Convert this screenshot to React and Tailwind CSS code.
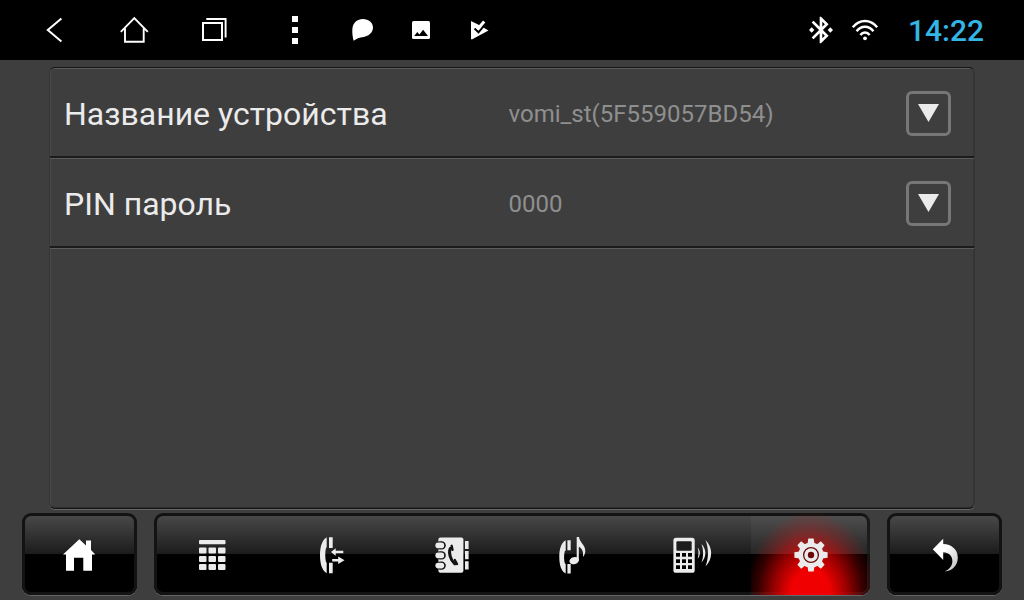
import clsx from "clsx";

const settings = [
  { id: "device-name", label: "Название устройства", value: "vomi_st(5F559057BD54)" },
  { id: "pin", label: "PIN пароль", value: "0000" },
];

/* Status bar icons, 32x32 */

const BackIcon = () => (
  <svg className="size-8" viewBox="0 0 32 32" fill="none" stroke="currentColor" strokeWidth="2">
    <path d="M23.4 4.4 9.8 16l13.6 11.6" />
  </svg>
);

const HomeOutlineIcon = () => (
  <svg className="size-8" viewBox="0 0 32 32" fill="none" stroke="currentColor" strokeWidth="1.9">
    <path d="M2.8 17.8 16.3 4.2l13.5 13.6M7 14.5v13.3h18.7V14.5" />
  </svg>
);

const RecentsIcon = () => (
  <svg className="size-8" viewBox="0 0 32 32" fill="none" stroke="currentColor">
    <rect x="5" y="9" width="19" height="17" strokeWidth="2" />
    <path d="M8.3 5h19.3v18.5" strokeWidth="1.9" />
  </svg>
);

const MoreIcon = () => (
  <svg className="size-8" viewBox="0 0 32 32" fill="currentColor">
    <path d="M14 2h6v6h-6zM14 13h6v6h-6zM14 24h6v6h-6z" />
  </svg>
);

const BubbleIcon = () => (
  <svg className="size-8" viewBox="0 0 32 32" fill="currentColor">
    <path d="M7.6 26.8C6.5 22.6 6.1 18.5 6.4 14.6 7 8.6 11.4 5 16.8 5 22.8 5 27 8.8 27 13.6c0 5-4.4 8.6-9.4 9.4-4.2.6-7.3 1.7-10 3.8z" />
  </svg>
);

const PictureIcon = () => (
  <svg className="size-8" viewBox="0 0 32 32">
    <rect x="7" y="7" width="18" height="18" rx="1.6" fill="currentColor" />
    <path d="M9.2 22l3.1-4 2.1 2.6 3.7-4.8L23 22z" fill="#000" />
  </svg>
);

const PlayCheckIcon = () => (
  <svg className="size-8" viewBox="0 0 32 32">
    <path d="M7 7l9 4.4 8.5 5L7.8 25.4 7 25z" fill="currentColor" />
    <path d="M10.600 14.600l3.900 3.600 7.200-8.600" fill="none" stroke="#000" strokeWidth="2" />
    <path d="M11.800 11.800l2.600 2.500 5.800-6.700" fill="none" stroke="currentColor" strokeWidth="3" />
  </svg>
);

const BluetoothIcon = () => (
  <svg className="size-8" viewBox="0 0 24 24" fill="currentColor">
    <path d="M7 12l-2-2-2 2 2 2 2-2zm10.71-4.29L12 2h-1v7.59L6.41 5 5 6.41 10.59 12 5 17.59 6.41 19 11 14.41V22h1l5.71-5.71-4.3-4.29 4.3-4.29zM13 5.83l1.88 1.88L13 9.59V5.83zm1.88 10.46L13 18.17v-3.76l1.88 1.88zM19 10l-2 2 2 2 2-2-2-2z" />
  </svg>
);

const WifiIcon = () => (
  <svg className="size-8" viewBox="0 0 32 32" fill="none" stroke="currentColor" strokeWidth="2.5">
    <path d="M3.8 13.2C10.5 5 21.5 5 28.2 13.2M7.6 17.2c4.6-5.8 12.2-5.8 16.8 0M11.4 21c2.5-3.4 6.7-3.4 9.2 0" />
    <circle cx="16" cy="24.3" r="1.9" fill="currentColor" stroke="none" />
  </svg>
);

/* Tab bar icons, 40x40 */

const HouseIcon = () => (
  <svg className="size-10" viewBox="0 0 40 40" fill="#fff">
    <path d="M19.3 5.3 26 11.5V6.5h5V16l4.3 4.5H32v16.2h-8.7v-13H14v13H6V20.5H3z" />
  </svg>
);

const KeypadIcon = () => (
  <svg className="size-10" viewBox="0 0 40 40" fill="currentColor">
    <rect x="5" y="6" width="26.5" height="4.3" rx="1" />
    {[13.6, 21.9, 30.1].map((y) =>
      [5, 14.5, 24].map((x) => (
        <rect key={`${x}-${y}`} x={x} y={y} width="7.5" height="6" rx="1" />
      ))
    )}
  </svg>
);

const CallLogIcon = () => (
  <svg className="size-10" viewBox="0 0 40 40" fill="currentColor">
    <path d="M13.7 3.3C9 6 7 13 7 21.3s2 15.4 6.7 18V28.7L13 28c-1-4-1-10 0-14l.7-.7z" />
    <path d="M16 3.3h3.7V14H16zM16 28.7h3.7v10.6H16z" />
    <path d="M18 18l4.7-3.7v2.4h7.6v2.6h-7.6v2.4z" />
    <path d="M31.5 26.3l-6.3 3.7v-2.4h-6V25h6v-2.4z" />
  </svg>
);

const ContactsIcon = () => (
  <svg className="size-10" viewBox="0 0 40 40" fill="currentColor">
    <rect x="6.4" y="3.4" width="25" height="35.3" rx="2" />
    <path d="M33 7h3.6v8H33zM33 17h3.6v8.3H33zM33 27.3h3.6v8.2H33z" />
    {[11.4, 21.4, 31.6].map((y) => (
      <g key={y}>
        <rect x="4" y={y - 4.2} width="9.8" height="8.4" rx="4.2" fill="#111" />
        <rect x="3.4" y={y - 2.8} width="8.8" height="5.6" rx="2.8" />
      </g>
    ))}
    <g fill="none" stroke="#111" strokeLinecap="round">
      <path d="M18.2 14.5c-1.7 4 .2 11.8 4.6 15.3" strokeWidth="3" />
      <path d="M19.6 11.8l.9 4M22.8 26l2.2 4" strokeWidth="2.4" />
    </g>
  </svg>
);

const MusicIcon = () => (
  <svg className="size-10" viewBox="0 0 40 40" fill="currentColor">
    <path d="M13.7 6.3C9.2 8.6 7.3 15 7.3 23s2 14.4 6.4 16.6V30l-.9-.8c-1-3.5-1-8.6 0-12l.9-.8z" />
    <path d="M15.4 6.3h3.3v10h-3.3zM15.4 30h3.3v9.6h-3.3z" />
    <ellipse cx="22.2" cy="26.6" rx="4.9" ry="3.5" transform="rotate(-18 22.2 26.6)" />
    <path d="M24.7 3H27c.6 5.5 6.3 7.5 6.3 14 0 2.3-1 4.5-2.3 6 .6-5-.6-8.5-4.2-10.3V26.5h-2.1z" />
  </svg>
);

const MobileIcon = () => (
  <svg className="size-10 overflow-visible" viewBox="0 0 40 40" fill="currentColor">
    <rect x="2.4" y="3.8" width="21.3" height="35" rx="2.6" />
    <rect x="5.4" y="7.3" width="15.3" height="9.4" rx="1" fill="#1c1c1c" />
    {[19, 25.3, 31.3].map((y) =>
      [5, 11, 17].map((x) => (
        <rect key={`${x}-${y}`} x={x} y={y} width="4" height="3.7" fill="#000" />
      ))
    )}
    <path d="M26.6 13.5c3 3.2 3 8 0 11.2 1.2-3.6 1.2-7.6 0-11.2zM30.5 10c5.2 5.4 5.2 13 0 18.4 2.2-5.8 2.2-12.6 0-18.4zM34.5 6c7.6 7.6 7.6 18.8 0 26.4 3.3-8.2 3.3-18.2 0-26.4z" />
  </svg>
);

const GearIcon = () => (
  <svg className="size-10" viewBox="0 0 40 40" fill="currentColor">
    <circle cx="21" cy="21" r="12.6" />
    {[0, 45, 90, 135].map((a) => (
      <path key={a} d="M18.3 4.4h5.4l.7 5v23.2l-.7 5h-5.4l-.7-5V9.4z" transform={`rotate(${a} 21 21)`} />
    ))}
    <circle cx="21" cy="21" r="7.4" fill="none" stroke="#6a0e0e" strokeWidth="1.3" />
    <circle cx="21" cy="21" r="3.2" fill="#6a0606" />
  </svg>
);

const ReturnIcon = () => (
  <svg className="size-10" viewBox="0 0 40 40">
    <defs>
      <linearGradient id="returnFill" x1="0" y1="0" x2="1" y2="1">
        <stop offset="0.4" stopColor="#fff" />
        <stop offset="1" stopColor="#bbb" />
      </linearGradient>
    </defs>
    <path
      d="M7.8 15.3 18.2 4.7V10c8.500.3 14.600 5.600 14.600 13.500 0 8-5.500 13.500-13 13.900 5-2.500 7.600-5.700 7.600-10.400 0-5-3.700-8.600-9.200-8.800V26z"
      fill="url(#returnFill)"
    />
  </svg>
);

const navButtons = [
  { id: "back", label: "Назад", Icon: BackIcon },
  { id: "home", label: "Домой", Icon: HomeOutlineIcon },
  { id: "recents", label: "Недавние", Icon: RecentsIcon },
  { id: "more", label: "Меню", Icon: MoreIcon },
];

const tabs = [
  { id: "keypad", label: "Набор номера", Icon: KeypadIcon },
  { id: "log", label: "Журнал вызовов", Icon: CallLogIcon },
  { id: "contacts", label: "Контакты", Icon: ContactsIcon },
  { id: "music", label: "Музыка", Icon: MusicIcon },
  { id: "devices", label: "Устройства", Icon: MobileIcon },
  { id: "settings", label: "Настройки", Icon: GearIcon },
];

// Glossy black key used along the bottom of the screen
const glossy =
  "h-[82px] rounded-[9px] bg-[linear-gradient(#484848_3px,#1c1c1c_50%,#000_50%)] shadow-[inset_0_0_0_3px_#131313,0_1px_0_#666]";

const StatusBar = () => (
  <header className="flex h-[60px] shrink-0 items-center justify-between bg-black pl-3.5 pr-10 text-white">
    <div className="flex items-center">
      <nav className="flex">
        {navButtons.map(({ id, label, Icon }) => (
          <button key={id} type="button" aria-label={label} className="flex w-20 justify-center">
            <Icon />
          </button>
        ))}
      </nav>
      <div className="ml-3 flex gap-[27px]">
        <BubbleIcon />
        <PictureIcon />
        <PlayCheckIcon />
      </div>
    </div>
    <div className="flex items-center">
      <BluetoothIcon />
      <div className="ml-3">
        <WifiIcon />
      </div>
      <time className="ml-[27px] pt-px text-[30px] leading-none font-medium text-[#33b5e5]">14:22</time>
    </div>
  </header>
);

const SettingRow = ({ id, label, value }) => (
  <li className="flex h-[90px] items-center pt-px pl-3.5 pr-[23px] shadow-[inset_0_-2px_0_#1b1b1b,0_1px_0_#5c5c5c]">
    <span id={id} className="w-1/2 text-[32px] text-[#ebebeb]">
      {label}
    </span>
    <span className="flex-1 pl-px text-2xl text-[#8f8f8f]">{value}</span>
    <button
      type="button"
      aria-labelledby={id}
      className="flex size-[45px] items-center justify-center rounded-md border-3 border-[#777] pb-0.5 text-[#ebebeb]"
    >
      <svg className="h-[18px] w-[21px]" viewBox="0 0 21 18" fill="currentColor">
        <path d="M0 0h21L10.5 18z" />
      </svg>
    </button>
  </li>
);

const TabBar = () => (
  <nav className="flex shrink-0 gap-[17px] px-[22px] pb-[5px]">
    <button type="button" aria-label="Главная" className={clsx(glossy, "flex w-[115px] items-center justify-center")}>
      <HouseIcon />
    </button>
    <div className={clsx(glossy, "grid flex-1 grid-cols-6 overflow-hidden text-[#ebebeb]")}>
      {tabs.map(({ id, label, Icon }) => (
        <button
          key={id}
          type="button"
          aria-label={label}
          className={clsx(
            "flex items-center justify-center",
            id === "settings" &&
              "bg-[linear-gradient(transparent_3px,#ffffff08_3px,#ffffff0c_50%,transparent_50%),radial-gradient(66px_84px_at_50%_100%,#f00000_30%,#f00000a8_54%,#f0000038_80%,transparent)]"
          )}
        >
          <Icon />
        </button>
      ))}
    </div>
    <button type="button" aria-label="Вернуться" className={clsx(glossy, "flex w-[115px] items-center justify-center")}>
      <ReturnIcon />
    </button>
  </nav>
);

export default function App() {
  return (
    <div className="flex min-h-screen flex-col bg-[#3e3e3e] font-['Roboto',sans-serif]">
      <StatusBar />
      <main className="flex flex-1 flex-col px-[49px] pt-[7px] pb-1">
        <ul className="flex-1 rounded-md border border-x-[#353535] border-t-[#151515] border-b-[#151515] shadow-[inset_1px_0_0_#494949,inset_-1px_0_0_#353535,inset_0_1px_0_#5c5c5c,inset_0_-1px_0_#2c2c2c,0_1px_0_#666]">
          {settings.map((item) => (
            <SettingRow key={item.id} {...item} />
          ))}
        </ul>
      </main>
      <TabBar />
    </div>
  );
}
